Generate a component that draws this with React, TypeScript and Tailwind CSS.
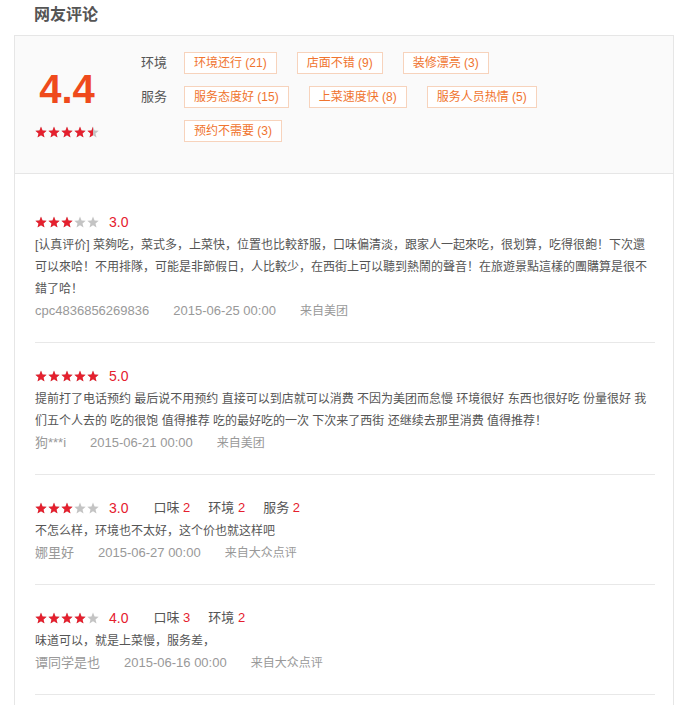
const reviews = [
  {
    score: 3,
    subs: [] as [string, number][],
    text: "[认真评价] 菜夠吃，菜式多，上菜快，位置也比較舒服，口味偏清淡，跟家人一起來吃，很划算，吃得很飽！下次還可以來哈！不用排隊，可能是非節假日，人比較少，在西街上可以聽到熱鬧的聲音！在旅遊景點這樣的團購算是很不錯了哈！",
    user: "cpc4836856269836",
    date: "2015-06-25 00:00",
    from: "来自美团",
  },
  {
    score: 5,
    subs: [] as [string, number][],
    text: "提前打了电话预约 最后说不用预约 直接可以到店就可以消费 不因为美团而怠慢 环境很好 东西也很好吃 份量很好 我们五个人去的 吃的很饱 值得推荐 吃的最好吃的一次 下次来了西街 还继续去那里消费 值得推荐！",
    user: "狗***i",
    date: "2015-06-21 00:00",
    from: "来自美团",
  },
  {
    score: 3,
    subs: [
      ["口味", 2],
      ["环境", 2],
      ["服务", 2],
    ] as [string, number][],
    text: "不怎么样，环境也不太好，这个价也就这样吧",
    user: "娜里好",
    date: "2015-06-27 00:00",
    from: "来自大众点评",
  },
  {
    score: 4,
    subs: [
      ["口味", 3],
      ["环境", 2],
    ] as [string, number][],
    text: "味道可以，就是上菜慢，服务差，",
    user: "谭同学是也",
    date: "2015-06-16 00:00",
    from: "来自大众点评",
  },
];

const tagRows = [
  { label: "环境", tags: ["环境还行 (21)", "店面不错 (9)", "装修漂亮 (3)"] },
  { label: "服务", tags: ["服务态度好 (15)", "上菜速度快 (8)", "服务人员热情 (5)"] },
  { label: "", tags: ["预约不需要 (3)"] },
];

const STAR = "M6 0.6l1.55 3.9 4.15 0.3-3.2 2.7 1 4.1L6 9.35 2.5 11.6l1-4.1L0.3 4.8l4.15-0.3z";

function Star({ fill }: { fill: number }) {
  // fill: 0..1 portion coloured red
  return (
    <svg width="12" height="12" viewBox="0 0 12 12" className="shrink-0">
      <path d={STAR} fill="#c4c4c4" />
      {fill > 0 && (
        <path d={STAR} fill="#e5202e" style={{ clipPath: `inset(0 ${(1 - fill) * 100}% 0 0)` }} />
      )}
    </svg>
  );
}

function Stars({ value }: { value: number }) {
  return (
    <div className="flex gap-[1px]">
      {[0, 1, 2, 3, 4].map((i) => (
        <Star key={i} fill={Math.max(0, Math.min(1, value - i))} />
      ))}
    </div>
  );
}

export default function App() {
  return (
    <div
      className="w-[688px] bg-white px-[14px] text-[12px] text-[#555]"
      style={{ fontFamily: '"Liberation Sans", "Noto Sans CJK SC", sans-serif' }}
    >
      <h2 className="h-[35px] pl-5 pt-[4px] text-[16px] font-bold leading-[22px] text-[#555]">
        网友评论
      </h2>

      <div className="border border-[#e6e6e6]">
        {/* Summary */}
        <div className="flex border-b border-[#e6e6e6] bg-[#fafafa] pl-5 pt-4 pb-[31px]">
          <div className="flex w-[64px] flex-col items-center pt-[17px]">
            <div className="text-[40px] font-bold leading-[40px] text-[#ef4a1c]">4.4</div>
            <div className="mt-[17px]">
              <Stars value={4.5} />
            </div>
          </div>

          <div className="ml-[42px] flex flex-col gap-3">
            {tagRows.map((row, r) => (
              <div key={r} className="flex items-center">
                <span className="w-[43px] text-[13px] leading-[22px] text-[#555]">{row.label}</span>
                <div className="flex gap-5">
                  {row.tags.map((t) => (
                    <span
                      key={t}
                      className="h-[22px] border border-[#f7d3bc] bg-white px-[9px] leading-[20px] text-[#f0742e]"
                    >
                      {t}
                    </span>
                  ))}
                </div>
              </div>
            ))}
          </div>
        </div>

        {/* Reviews */}
        <div className="pl-5 pr-[18px] pt-[15px] pb-6">
          {reviews.map((rv, idx) => (
            <div key={idx} className="border-b border-[#e8e8e8] pt-[21px] pb-[20px] leading-[22px]">
              <div className="flex h-[24px] items-center">
                <Stars value={rv.score} />
                <span className="ml-[10px] text-[14px] text-[#e5202e]">{rv.score.toFixed(1)}</span>
                {rv.subs.length > 0 && (
                  <div className="ml-[25px] flex gap-[18px] text-[13px]">
                    {rv.subs.map(([k, v]) => (
                      <span key={k} className="text-[#555]">
                        {k} <span className="text-[#e5202e]">{v}</span>
                      </span>
                    ))}
                  </div>
                )}
              </div>
              <p className="text-[#555]">{rv.text}</p>
              <div className="flex gap-6 text-[#999]">
                <span className="text-[13px]">{rv.user}</span>
                <span className="text-[13px]">{rv.date}</span>
                <span>{rv.from}</span>
              </div>
            </div>
          ))}
        </div>
      </div>
    </div>
  );
}
